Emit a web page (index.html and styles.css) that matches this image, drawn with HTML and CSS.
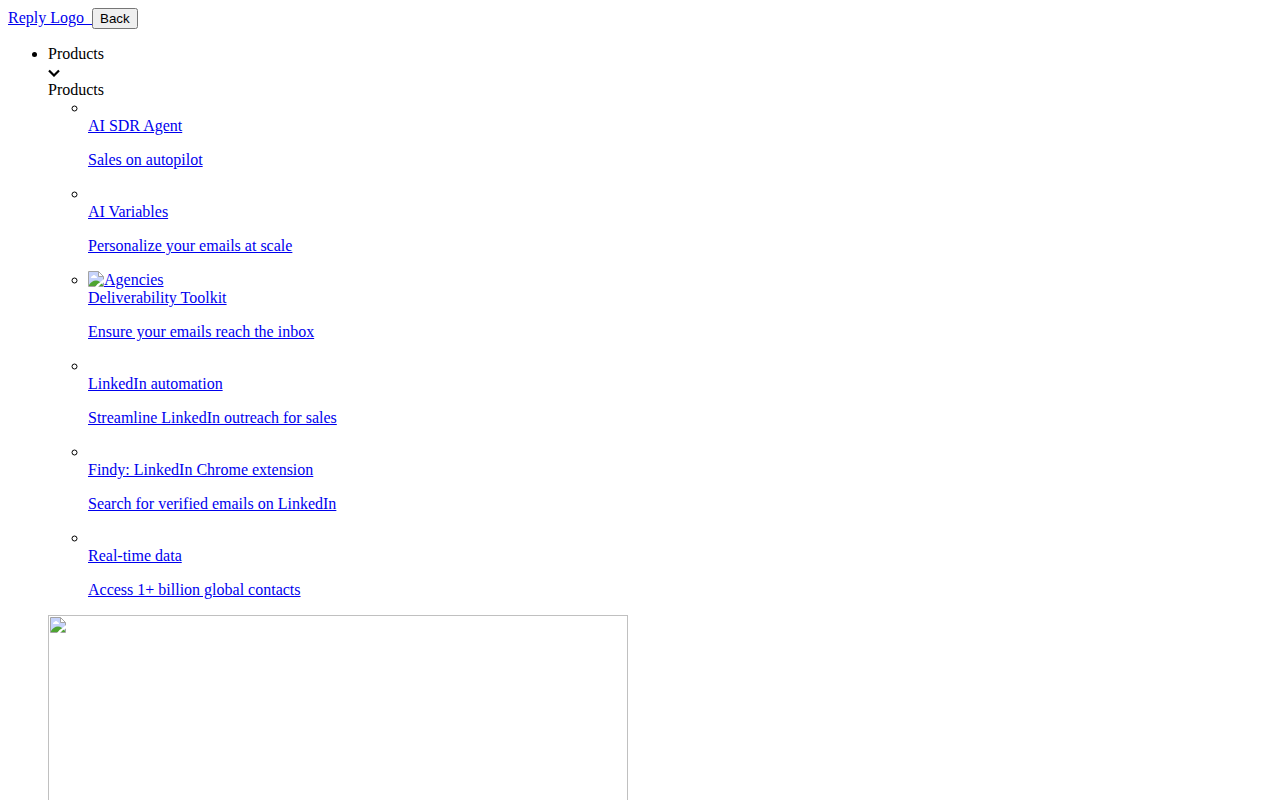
FILE: index.html
```
<!DOCTYPE html>
<html lang="en">
<head>
    <meta charset="UTF-8">
    <meta name="viewport" content="width=device-width, initial-scale=1.0">
    <title>Reply</title>
    <link rel="stylesheet" href="styles.css">
</head>
<body>
    <!-- Shared placeholder picture -->
    <svg class="sprite" aria-hidden="true">
        <symbol id="placeholder" viewBox="0 0 16 16">
            <path fill="#c6d3fb" d="M1 1h10v4h4v10H1z"/>
            <path fill="#fff" d="M3 7c0-1.500 1-2 1.500-2c.5-1.500 2.500-1.500 3 0c1 0 1.500 1 1.500 2z"/>
            <path fill="#4ea431" d="M1 15v-1c2-3 4-4.500 7-4.500c2.500 0 5 1.500 7 4.500v1z"/>
            <path fill="#fff" d="M11 1l4 4h-4z"/>
            <path fill="none" stroke="#a3a3a3" d="M.5.5h10l5 5v10H.5zM10.500.5v5h5"/>
            <path fill="#fff" d="M16 8v3.500l-3 1.500-3 3H7l2.500-3 3-2z"/>
        </symbol>
    </svg>

    <header>
        <a href="#">Reply Logo&nbsp; </a><button type="button" class="back">Back</button>
        <nav>
            <ul>
                <li>
                    <div>Products</div>
                    <div>
                        <svg class="chevron" width="12" height="8" viewBox="0 0 12 8" fill="none">
                            <path d="M1 1.500L6 6.500l5-5" stroke="#000" stroke-width="2.200"/>
                        </svg>
                    </div>
                    <div>Products</div>
                    <ul>
                        <li>
                            <a href="#">
                                <span class="icon"></span>
                                <div>AI SDR Agent</div>
                                <p>Sales on autopilot</p>
                            </a>
                        </li>
                        <li>
                            <a href="#">
                                <span class="icon"></span>
                                <div>AI Variables</div>
                                <p>Personalize your emails at scale</p>
                            </a>
                        </li>
                        <li>
                            <a href="#">
                                <svg class="placeholder" width="16" height="16"><use href="#placeholder"/></svg>Agencies
                                <div>Deliverability Toolkit</div>
                                <p>Ensure your emails reach the inbox</p>
                            </a>
                        </li>
                        <li>
                            <a href="#">
                                <span class="icon"></span>
                                <div>LinkedIn automation</div>
                                <p>Streamline LinkedIn outreach for sales</p>
                            </a>
                        </li>
                        <li>
                            <a href="#">
                                <span class="icon"></span>
                                <div>Findy: LinkedIn Chrome extension</div>
                                <p>Search for verified emails on LinkedIn</p>
                            </a>
                        </li>
                        <li>
                            <a href="#">
                                <span class="icon"></span>
                                <div>Real-time data</div>
                                <p>Access 1+ billion global contacts</p>
                            </a>
                        </li>
                    </ul>
                    <div class="banner">
                        <svg class="placeholder" width="16" height="16"><use href="#placeholder"/></svg>
                    </div>
                </li>
            </ul>
        </nav>
    </header>
</body>
</html>
```

FILE: styles.css
```
body {
    font-family: "Liberation Serif", "Times New Roman", serif;
    font-size: 16px;
    background-color: #fff;
    color: #000;
}

a {
    color: #0000ee;
}

.back {
    font-family: "Liberation Sans", Arial, sans-serif;
}

.sprite {
    display: none;
}

/* keeps the icon line open when there is no picture in it */
.icon {
    display: inline-block;
    height: 12px;
}

.placeholder {
    vertical-align: top;
}

.banner {
    box-sizing: border-box;
    max-width: 580px;
    height: 320px;
    padding: 1px;
    border: 1px solid #c0c0c0;
}

.banner .placeholder {
    display: block;
}
```
